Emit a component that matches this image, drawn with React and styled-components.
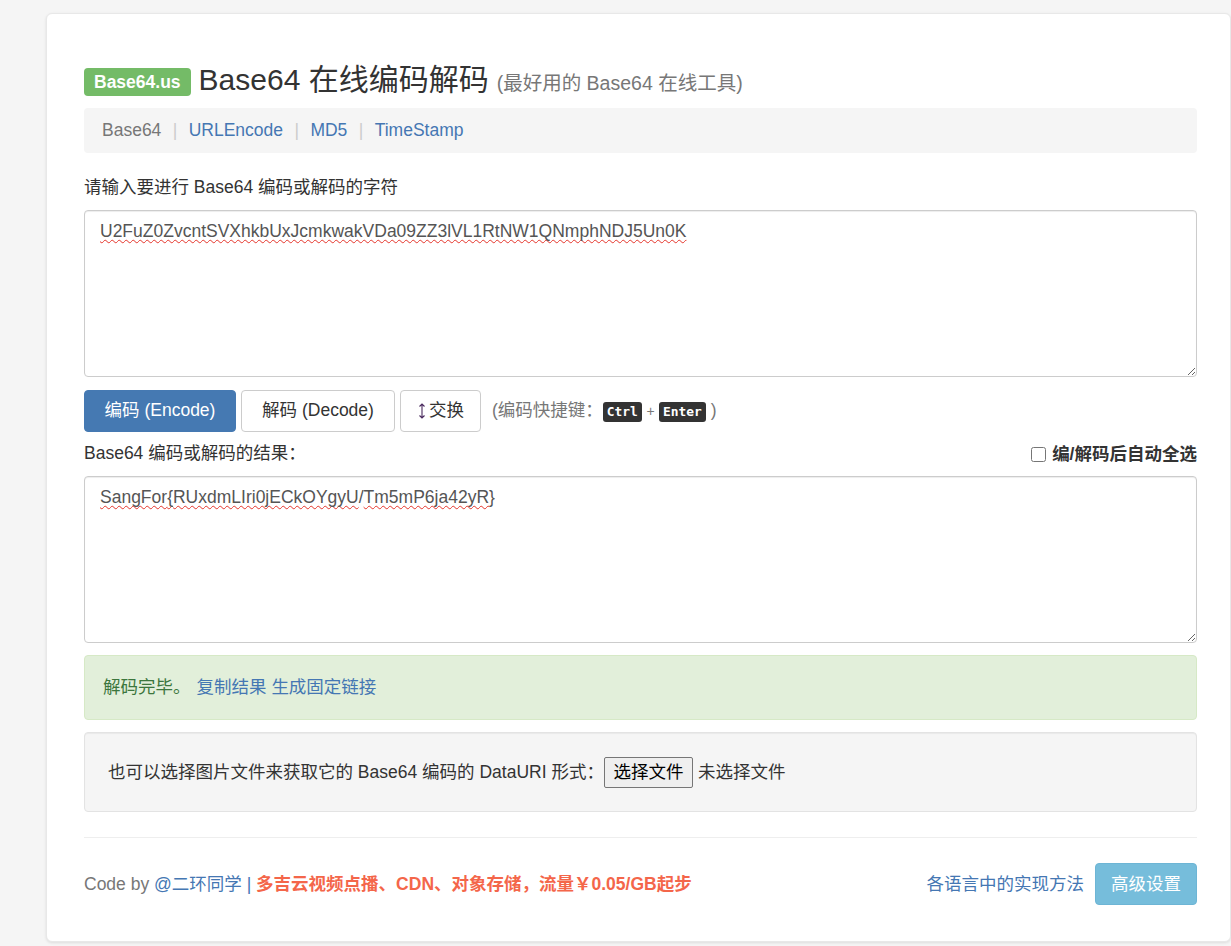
import React from "react";
import styled, { createGlobalStyle } from "styled-components";

const Global = createGlobalStyle`
  html, body { margin: 0; padding: 0; background: #f5f5f5; height: 946px; overflow: hidden; }
  body { font-family: "Liberation Sans", "Noto Sans CJK SC", sans-serif; font-size: 17.5px; line-height: 1.43; color: #333; }
  * { box-sizing: border-box; }
  a { color: #4577b3; text-decoration: none; }
`;
const Page = styled.div`padding: 13px 0 0 46px;`;
const Card = styled.main`
  height: 929px; background: #fff; border: 1px solid #e8e8e8; border-radius: 6px;
  box-shadow: 0 1px 3px rgba(0,0,0,.1); padding: 45px 33px 0 37px; display: flex; flex-direction: column;
`;
const Header = styled.h1`
  margin: 0; display: flex; align-items: center; gap: 8px; font-weight: 400; font-size: 30px; line-height: 42px; color: #333; height: 49px;
`;
const Badge = styled.span`
  background: #74bb67; color: #fff; font-size: 17.5px; font-weight: 700; line-height: 28px; padding: 0 10px; border-radius: 4px; height: 28px; margin-top: 4px; margin-bottom: 7px;
`;
const Title = styled.span`margin-bottom: 5px;`;
const Sub = styled.small`font-size: 19.5px; color: #777; margin-left: 8px;`;
const Crumbs = styled.nav`
  background: #f5f5f5; border-radius: 4px; height: 45px; padding: 0 18px; display: flex; align-items: center; color: #777;
`;
const Sep = styled.span`color: #ccc; margin: 0 11.4px;`;
const Label = styled.div`line-height: 23px; color: #333;`;
const FirstLabel = styled(Label)`margin-top: 23px; margin-bottom: 11px;`;
const TextBox = styled.div`
  height: 167px; border: 1px solid #ccc; border-radius: 4px; padding: 8px 15px; line-height: 24px; color: #555;
  resize: vertical; overflow: auto; box-shadow: inset 0 1px 1px rgba(0,0,0,.075);
`;
const Wavy = styled.span`text-decoration: underline wavy #e5352b 1.25px; text-decoration-skip-ink: none; text-underline-offset: 2px;`;
const Actions = styled.div`display: flex; align-items: center; gap: 5px; margin-top: 13px; height: 42px;`;
const Btn = styled.button`
  font: inherit; height: 42px; border-radius: 4px; cursor: pointer; padding: 0;
  width: ${p => p.$width}px;
  border: 1px solid ${p => (p.$primary ? "#4579b2" : "#ccc")};
  background: ${p => (p.$primary ? "#4579b2" : "#fff")};
  color: ${p => (p.$primary ? "#fff" : "#333")};
`;
const SwapBtn = styled(Btn)`display: flex; align-items: center; justify-content: center; gap: 2px;`;
const Hint = styled.span`color: #777; margin-left: 6px; display: flex; align-items: center;`;
const Kbd = styled.kbd`
  font-family: "DejaVu Sans Mono", monospace; font-size: 12.9px; font-weight: 700; background: #333; color: #fff; border-radius: 3px; padding: 0 4px; line-height: 20px; height: 20px; margin-top: 3px;
`;
const Plus = styled.span`font-size: 14px; margin: 0 4.5px; color: #777;`;
const ResultHead = styled.div`display: flex; justify-content: space-between; align-items: center; height: 44px;`;
const ResultLabel = styled(Label)`padding-bottom: 2px;`;
const AutoSelect = styled.label`display: flex; align-items: center; gap: 6px; font-weight: 700; padding-top: 2px;`;
const Check = styled.input`margin: 0; width: 15px; height: 15px;`;
const Success = styled.div`
  margin-top: 12px; height: 65px; background: #e2efda; border: 1px solid #d6e9c6; border-radius: 4px; display: flex; align-items: center; gap: 6px; padding: 0 18px; color: #3c763d;
`;
const Well = styled.div`
  margin-top: 12px; height: 80px; background: #f5f5f5; border: 1px solid #e3e3e3; border-radius: 4px; display: flex; align-items: center; padding: 2px 23px 0; color: #333;
  box-shadow: inset 0 1px 1px rgba(0,0,0,.05);
`;
const FileBtn = styled.span`
  margin: -2px 5px 0 0; height: 31px; border: 1px solid #767676; border-radius: 2px; background: #efefef; color: #000; padding: 2px 8.5px 0; display: flex; align-items: center;
`;
const Rule = styled.hr`margin: 25px 0 0; border: 0; border-top: 1px solid #eee;`;
const Footer = styled.footer`display: flex; justify-content: space-between; align-items: center; margin-top: 25px; height: 42px;`;
const Credit = styled.div`color: #777; padding-top: 2px;`;
const Pipe = styled.span`color: #4577b3;`;
const Promo = styled.a`color: #f4664a; font-weight: 700;`;
const FootRight = styled.div`display: flex; align-items: center; gap: 11px;`;
const FootLink = styled.a`padding-top: 2px;`;
const InfoBtn = styled.button`
  font: inherit; height: 42px; width: 102px; padding: 2px 0 0; background: #76bddb; border: 1px solid #6db5d5; color: #fff; border-radius: 4px;
`;

export default function App() {
  return (
    <Page>
      <Global />
      <Card>
        <Header>
          <Badge>Base64.us</Badge>
          <Title>Base64 在线编码解码<Sub>(最好用的 Base64 在线工具)</Sub></Title>
        </Header>
        <Crumbs>
          <span>Base64</span><Sep>|</Sep>
          <a href="#u">URLEncode</a><Sep>|</Sep>
          <a href="#m">MD5</a><Sep>|</Sep>
          <a href="#t">TimeStamp</a>
        </Crumbs>
        <FirstLabel>请输入要进行 Base64 编码或解码的字符</FirstLabel>
        <TextBox><Wavy>U2FuZ0ZvcntSVXhkbUxJcmkwakVDa09ZZ3lVL1RtNW1QNmphNDJ5Un0K</Wavy></TextBox>
        <Actions>
          <Btn $primary $width={152}>编码 (Encode)</Btn>
          <Btn $width={154}>解码 (Decode)</Btn>
          <SwapBtn $width={81}>
            <svg width="10" height="18" viewBox="0 0 10 18" fill="none" stroke="#4a2a5e" strokeWidth="1.1"><path d="M5 2v14M2.5 4.5L5 2l2.5 2.5M2.5 13.5L5 16l2.5-2.5" /></svg>
            交换
          </SwapBtn>
          <Hint>(编码快捷键：<Kbd>Ctrl</Kbd><Plus>+</Plus><Kbd>Enter</Kbd>&nbsp;)</Hint>
        </Actions>
        <ResultHead>
          <ResultLabel>Base64 编码或解码的结果：</ResultLabel>
          <AutoSelect><Check type="checkbox" />编/解码后自动全选</AutoSelect>
        </ResultHead>
        <TextBox><Wavy>SangFor{"{"}RUxdmLIri0jECkOYgyU</Wavy>/<Wavy>Tm5mP6ja42yR</Wavy>{"}"}</TextBox>
        <Success>
          <span>解码完毕。</span>
          <span><a href="#c">复制结果</a> <a href="#l">生成固定链接</a></span>
        </Success>
        <Well>
          也可以选择图片文件来获取它的 Base64 编码的 DataURI 形式：
          <FileBtn>选择文件</FileBtn>
          未选择文件
        </Well>
        <Rule />
        <Footer>
          <Credit>
            Code by <a href="#e">@二环同学</a> <Pipe>|</Pipe> <Promo href="#p">多吉云视频点播、CDN、对象存储，流量￥0.05/GB起步</Promo>
          </Credit>
          <FootRight>
            <FootLink href="#i">各语言中的实现方法</FootLink>
            <InfoBtn>高级设置</InfoBtn>
          </FootRight>
        </Footer>
      </Card>
    </Page>
  );
}
